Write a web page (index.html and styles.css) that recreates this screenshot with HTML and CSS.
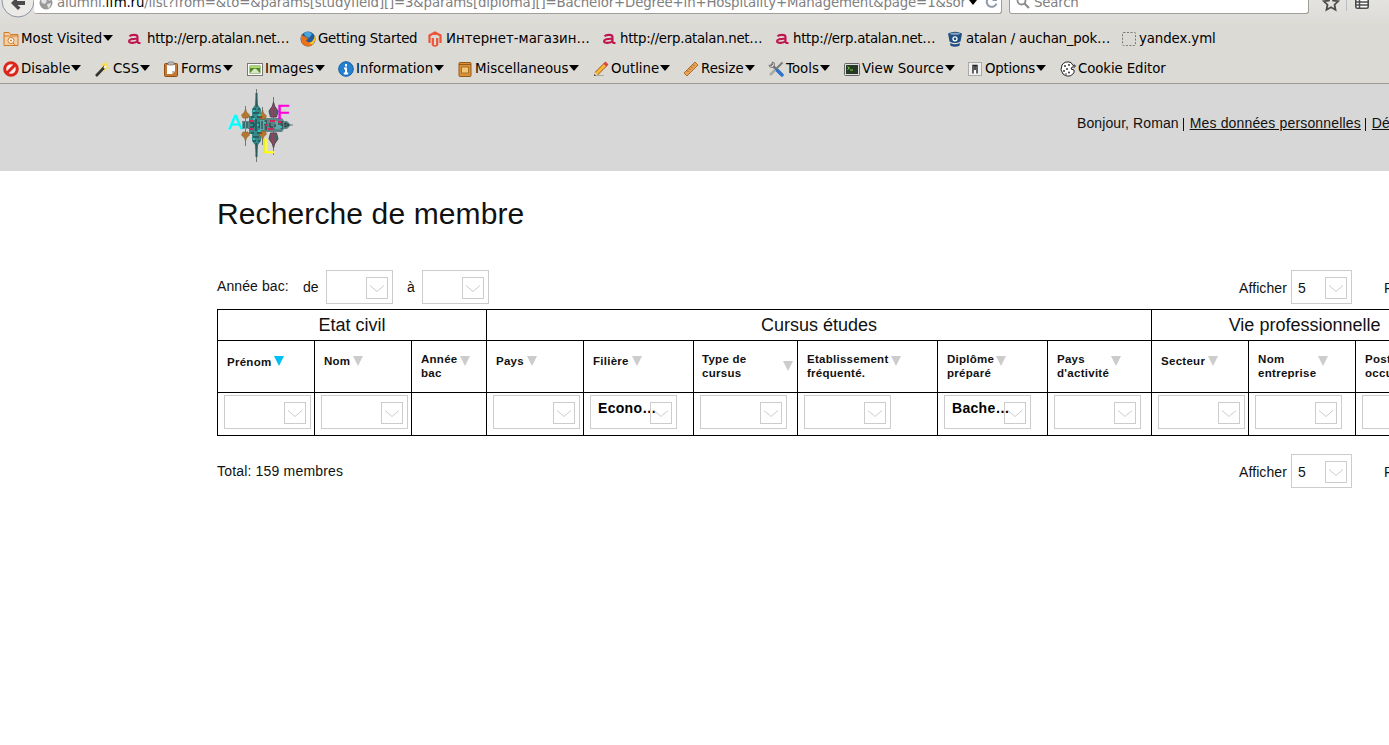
FILE: index.html
```
<!DOCTYPE html>
<html lang="fr">

<head>
    <meta charset="UTF-8">
    <title>Recherche de membre</title>
    <link rel="stylesheet" href="styles.css">
</head>

<body>
    <!-- shared symbols -->
    <svg class="defs" width="0" height="0">
        <symbol id="arrow" viewBox="0 0 10 6"><path d="M0 0h10L5 6z" fill="#000"/></symbol>
        <symbol id="atalan" viewBox="0 0 16 16"><path d="M3.500 5.300C5 3.500 11.500 3 11.500 6v4.500q0 1.700 3 1.500M11.500 7.800C6 7.600 3 8.300 3 10.200c0 2.400 6.500 2.200 8.500-.4" fill="none" stroke="#c0144f" stroke-width="2.100"/></symbol>
        <symbol id="sort" viewBox="0 0 10 10"><path d="M0 0h10L5 10z" fill="currentColor"/></symbol>
        <symbol id="chev" viewBox="0 0 14 7"><path d="M0 .5l7 6 7-6" fill="none" stroke="#ccc"/></symbol>
    </svg>

    <div class="chrome">
        <div class="navbar">
            <svg class="back" width="34" height="19" viewBox="0 0 34 19"><circle cx="18" cy="1" r="16" fill="#eceae7" stroke="#8b95a3"/><path d="M18 -4l-7 7 7 7 2.500-2.500L17.500 5H25V1h-8z" fill="#4b4b4b"/></svg>
            <div class="urlbar">
                <svg class="globe" width="14" height="14" viewBox="0 0 14 14"><circle cx="7" cy="7" r="6.500" fill="#999"/><path d="M2 4l4-1 2 2-2 3-3-1zM8 8l4-1-1 4-2 1zM9 2l3 2-2 1z" fill="#e4e4e4"/></svg>
                <span class="url">alumni.<b>ifm.ru</b>/list?from=&amp;to=&amp;params[studyfield][]=3&amp;params[diploma][]=Bachelor+Degree+in+Hospitality+Management&amp;page=1&amp;sor</span>
                <svg class="drop" width="8" height="5" viewBox="0 0 10 6"><use href="#arrow"/></svg>
                <svg class="reload" width="13" height="13" viewBox="0 0 13 13"><path d="M10 3A5 5 0 1 0 11.500 8.500" fill="none" stroke="#8f9baa" stroke-width="2"/><path d="M12 1v5H7z" fill="#8f9baa"/></svg>
            </div>
            <div class="searchbar">
                <svg width="14" height="14" viewBox="0 0 14 14"><circle cx="5.500" cy="5.500" r="4" fill="none" stroke="#8c8c8c" stroke-width="1.800"/><path d="M8.500 8.500l4.500 4.500" stroke="#8c8c8c" stroke-width="2.200"/></svg>
                <span>Search</span>
            </div>
            <svg class="star" width="18" height="18" viewBox="0 0 18 18"><path d="M9 2l2.200 4.600 5 .6-3.700 3.500 1 5L9 13.200l-4.500 2.500 1-5L1.800 7.200l5-.6z" fill="none" stroke="#4d4d4d" stroke-width="1.800"/></svg>
            <span class="separator"></span>
            <svg class="list" width="14" height="14" viewBox="0 0 14 14"><rect x=".8" y=".8" width="12.400" height="12.400" rx="1.500" fill="#fff" stroke="#4d4d4d" stroke-width="1.600"/><path d="M1 4h12M1 7h12M1 10h12M4.500 1v12" stroke="#4d4d4d" stroke-width="1.500"/></svg>
        </div>

        <div class="toolbar bookmarks">
            <span class="item"><svg viewBox="0 0 16 16"><path d="M1 14.500v-13h5l1.500 2H15v11z" fill="#f3cfa3" stroke="#d07a28"/><path d="M1 5h14" stroke="#d07a28"/><circle cx="8" cy="9.500" r="3" fill="#fff" stroke="#d07a28"/><circle cx="8" cy="9.500" r="1" fill="#d07a28"/><path d="M10 12l2 2" stroke="#d07a28"/></svg>Most Visited<svg class="caret"><use href="#arrow"/></svg></span>
            <span class="item link first"><svg viewBox="0 0 16 16"><use href="#atalan"/></svg>http://erp.atalan.net…</span>
            <span class="item start"><svg viewBox="0 0 16 16"><circle cx="8" cy="8" r="7.500" fill="#215a9c"/><path d="M4 2q5-3 8 1L9 7 5 5z" fill="#4ba5d9"/><path d="M1.500 3Q-.500 9 3 13.500q5 4 10 0 3-4 2-9-.5 5-4 6.500-4 1-5-2l2.500-1L6 6 3 5z" fill="#ec7218"/><path d="M13 13.500q3-4 2-9-1 4-3 6l-3 2z" fill="#f9c431"/></svg>Getting Started</span>
            <span class="item mag"><svg viewBox="0 0 16 16"><path d="M2.500 12V4.500L8 1.500l5.500 3V12M5.800 14V7M10.200 14V7M8 1.500V4M8 15l-2.500-1.500M8 15l2.500-1.500" fill="none" stroke="#ed5338" stroke-width="2.200"/></svg>Интернет-магазин…</span>
            <span class="item link"><svg viewBox="0 0 16 16"><use href="#atalan"/></svg>http://erp.atalan.net…</span>
            <span class="item link"><svg viewBox="0 0 16 16"><use href="#atalan"/></svg>http://erp.atalan.net…</span>
            <span class="item bitbucket"><svg viewBox="0 0 16 16"><path d="M1 2.500l1.500 8q5.500 3 11 0l1.500-8Q8-1 1 2.500z" fill="#205081"/><path d="M3 12l.5 2.800q4.500 2 9 0L13 12q-5 2.500-10 0z" fill="#205081"/><ellipse cx="8" cy="2.800" rx="5" ry="1" fill="#88a6c4"/><circle cx="8" cy="7.800" r="2" fill="#205081" stroke="#fff" stroke-width="1.300"/></svg>atalan / auchan_pok…</span>
            <span class="item yml"><svg viewBox="0 0 16 16"><rect x="1.500" y="1.500" width="13" height="13" rx="1" fill="none" stroke="#777" stroke-dasharray="2 1.500"/></svg>yandex.yml</span>
        </div>

        <div class="toolbar devtools">
            <span class="item"><svg viewBox="0 0 16 16"><circle cx="8" cy="8" r="6.300" fill="#f7eae8" stroke="#d9271c" stroke-width="3"/><path d="M4 12l8-8" stroke="#d9271c" stroke-width="3"/></svg>Disable<svg class="caret"><use href="#arrow"/></svg></span>
            <span class="item"><svg viewBox="0 0 16 16"><path d="M9 0l1 3 4-1-2 3 3 3-4-.5L10 11 8.500 8 5 7l3-2-2-3 2.500 1z" fill="#f7dc4b"/><path d="M1 15L10 5.500" stroke="#333" stroke-width="2.600"/><path d="M9 7l2-2" stroke="#fff" stroke-width="2"/></svg>CSS<svg class="caret"><use href="#arrow"/></svg></span>
            <span class="item"><svg viewBox="0 0 16 16"><rect x="1.500" y="2.500" width="13" height="13" rx="1" fill="#c47832" stroke="#8f5018"/><path d="M4 4h8v6l-3 3H4z" fill="#fff"/><path d="M12 10l-3 3v-3z" fill="#bbb"/><rect x="5" y="1" width="6" height="3" rx="1" fill="#bbb" stroke="#777" stroke-width=".8"/></svg>Forms<svg class="caret"><use href="#arrow"/></svg></span>
            <span class="item"><svg viewBox="0 0 16 16"><rect x=".5" y="2.500" width="15" height="12" fill="#fff" stroke="#777"/><rect x="2.500" y="4.500" width="11" height="8" fill="#4e8b2d"/><path d="M3 5h10v2H3z" fill="#b1d86b"/><path d="M5 10q3-5 6 0l2 2H3z" fill="#dce6c7"/></svg>Images<svg class="caret"><use href="#arrow"/></svg></span>
            <span class="item"><svg viewBox="0 0 16 16"><circle cx="8" cy="8" r="7.300" fill="#2380d2" stroke="#145da8"/><path d="M8 3v2.500M6 7.500h2V12M5.800 12.500h4.400" stroke="#fff" stroke-width="2"/></svg>Information<svg class="caret"><use href="#arrow"/></svg></span>
            <span class="item"><svg viewBox="0 0 16 16"><rect x="2" y="1.500" width="12" height="14" rx="1" fill="#d89239" stroke="#95591a"/><path d="M2 3.500h12" stroke="#95591a"/><rect x="4.500" y="6" width="7" height="6" fill="#f2c777" stroke="#ac6e25"/></svg>Miscellaneous<svg class="caret"><use href="#arrow"/></svg></span>
            <span class="item"><svg viewBox="0 0 16 16"><path d="M2 14.500h9" stroke="#aaa"/><path d="M3 13L13 3" stroke="#9c5c14" stroke-width="4.500"/><path d="M3.500 12.500L12 4" stroke="#f9b637" stroke-width="3"/><path d="M12 4l2-2" stroke="#d44" stroke-width="4"/><path d="M1 15l1-4 3 3z" fill="#efd8b0"/><path d="M1 15l.5-2L3 14.500z" fill="#222"/></svg>Outline<svg class="caret"><use href="#arrow"/></svg></span>
            <span class="item"><svg viewBox="0 0 16 16"><path d="M1 12L12 1l3 3L4 15z" fill="#e6a45a" stroke="#b36d25"/><path d="M4 9.500l1.500 1.500M6 7.500L7.500 9M8 5.500L9.500 7M10 3.500L11.500 5" stroke="#965516"/></svg>Resize<svg class="caret"><use href="#arrow"/></svg></span>
            <span class="item"><svg viewBox="0 0 16 16"><path d="M3 3l10 10" stroke="#777" stroke-width="2.500"/><path d="M1 4q0 3 3.500 2.500L6.500 4Q7 1 4 1l1 2-2 2z" fill="#ddd" stroke="#666" stroke-width=".8"/><path d="M14.500 1.500L8 8" stroke="#777" stroke-width="1.800"/><path d="M2 14l5-5" stroke="#aaa" stroke-width="2.600"/><path d="M9.500 9.500l4.500 4.500" stroke="#2f74ca" stroke-width="3.500" stroke-linecap="round"/></svg>Tools<svg class="caret"><use href="#arrow"/></svg></span>
            <span class="item"><svg viewBox="0 0 16 16"><rect x=".5" y="2.500" width="15" height="12" rx="1" fill="#ddd" stroke="#666"/><rect x="2" y="4" width="12" height="9" fill="#253a24"/><path d="M3.500 5.500l2 1.500-2 1.500M6 9h3" fill="none" stroke="#8bd052"/></svg>View Source<svg class="caret"><use href="#arrow"/></svg></span>
            <span class="item options"><svg viewBox="0 0 16 16"><rect x="1.500" y="1.500" width="13" height="13" fill="#eee" stroke="#aaa"/><path d="M6 12.500V4.500h4v8" fill="#fff" stroke="#222" stroke-width="1.400"/><path d="M8 5v4" stroke="#222" stroke-width="1.600"/></svg>Options<svg class="caret"><use href="#arrow"/></svg></span>
            <span class="item yml"><svg viewBox="0 0 16 16"><path d="M11 1.500Q5-.500 2 4-.500 9 3 13q5 4 9.500.500Q15 11 14 9l-3-1 1-2 3 0V4l-2 .500z" fill="#fff" stroke="#222"/><g fill="#222"><circle cx="5" cy="5" r=".9"/><circle cx="9" cy="4" r=".9"/><circle cx="7" cy="8" r=".9"/><circle cx="4" cy="10" r=".9"/><circle cx="9" cy="11.500" r=".9"/><circle cx="6" cy="13" r=".8"/></g></svg>Cookie Editor</span>
        </div>
    </div>

    <header class="header">
        <svg class="logo" width="70" height="76" viewBox="0 0 70 76">
            <path d="M17.500 19v40M28.500 2v73M34.500 20v38M45.500 10v58M58 38h7" stroke="#777"/>
            <!-- base -->
            <path d="M14 34h10v-3h30l2 3h3l4 4-4 4h-3l-2 3H24v-3H14z" fill="#5d8587"/>
            <!-- tall tower and its reflection -->
            <path d="M28.500 6l1.500 12 3 4v7h3v18h-3v7l-3 4-1.500 12L27 58l-3-4v-7h-3V29h3v-7l3-4z" fill="#37898a"/>
            <path d="M28.500 6v14M28.500 56v14" stroke="#2a5a5c" stroke-width="2"/>
            <!-- domes -->
            <g fill="#b8762c" stroke="#8c5c2c" stroke-width=".6">
                <path d="M17.500 22l1 3 3 3-1.500 3h-5l-1.500-3 3-3zM17.500 54l1-3 3-3-1.500-3h-5l-1.500 3 3 3z"/>
                <path d="M34.500 23l1 3 3 3-1.500 3h-5l-1.500-3 3-3zM34.500 53l1-3 3-3-1.500-3h-5l-1.500 3 3 3z"/>
            </g>
            <path d="M45.500 15l1 4 3.500 5-1.500 6h-6l-1.500-6 3.500-5zM45.500 61l1-4 3.500-5-1.500-6h-6l-1.500 6 3.500 5z" fill="#94445f" stroke="#54404f"/>
            <path d="M43 23v6M46 20v9M48.500 23v5M43 47v6M46 47v9M48.500 48v5" stroke="#3b6466"/>
            <path d="M14 35h6v7h-6zM32 33h4v10h-4zM47 34h5v8h-5z" fill="#5fa9a9"/>
            <path d="M21 34h5M21 42h5M42 34h5M40 42h6M37 38h3M50 35h3" stroke="#d0295a" stroke-width="2"/>
            <g fill="none" stroke="#1c3436" stroke-width="1">
                <path d="M25 22h3M30 22h2M25 26h6M23 30h3M29 30h5M23 46h3M29 46h5M25 50h6M25 54h3M30 54h2"/>
                <path d="M16 35v6M19 35v6M22 36h4v4h-4M28 32v12M31 35v6M34 34v8M38 33v4h-2M38 43v-4M42 36v4h3M47 37v3M50 37h3M54 34v8M57 36l4 2-4 2z"/>
            </g>
            <path d="M25 24h2M30 28h3M25 32h2M30 44h3M25 52h2M29 38h2M52 40h2M36 36h2" stroke="#35d4d0" stroke-width="1.300"/>
            <g class="logo-letters"><text x="0" y="42" fill="#0ff" stroke="#0ff">A</text><text x="49" y="32" fill="#f0d" stroke="#f0d">F</text><text x="35" y="66" fill="#ff0" stroke="#ff0">L</text></g>
        </svg>
        <div class="user-menu"><span>Bonjour, Roman</span><i></i><a href="#">Mes données personnelles</a><i></i><a href="#">Déconnexion</a></div>
    </header>

    <main>
        <h1>Recherche de membre</h1>

        <div class="bar">
            <span class="bac">Année bac:</span>
            <span class="de">de</span>
            <div class="select year"><span class="btn"><svg><use href="#chev"/></svg></span></div>
            <span class="a">à</span>
            <div class="select year"><span class="btn"><svg><use href="#chev"/></svg></span></div>
            <div class="pager">
                <span>Afficher</span>
                <div class="select count">5<span class="btn"><svg><use href="#chev"/></svg></span></div>
                <span class="page">Page</span>
            </div>
        </div>

        <table>
            <colgroup>
                <col class="w97"><col class="w97"><col class="w75"><col class="w97"><col class="w110"><col class="w104">
                <col class="w140"><col class="w110"><col class="w104"><col class="w97"><col class="w107"><col class="w102">
            </colgroup>
            <tr class="groups">
                <th colspan="3">Etat civil</th>
                <th colspan="6">Cursus études</th>
                <th colspan="3">Vie professionnelle</th>
            </tr>
            <tr class="titles">
                <th><div class="one active"><span>Prénom</span><svg><use href="#sort"/></svg></div></th>
                <th><div class="one"><span>Nom</span><svg><use href="#sort"/></svg></div></th>
                <th><div><span>Année<br>bac</span><svg><use href="#sort"/></svg></div></th>
                <th><div class="one"><span>Pays</span><svg><use href="#sort"/></svg></div></th>
                <th><div class="one"><span>Filière</span><svg><use href="#sort"/></svg></div></th>
                <th><div class="type"><span>Type de<br>cursus</span><svg><use href="#sort"/></svg></div></th>
                <th><div><span>Etablissement<br>fréquenté.</span><svg><use href="#sort"/></svg></div></th>
                <th><div><span>Diplôme<br>préparé</span><svg><use href="#sort"/></svg></div></th>
                <th><div><span>Pays<br>d'activité</span><svg><use href="#sort"/></svg></div></th>
                <th><div class="one"><span>Secteur</span><svg><use href="#sort"/></svg></div></th>
                <th><div><span>Nom<br>entreprise</span><svg><use href="#sort"/></svg></div></th>
                <th><div><span>Poste<br>occupé</span><svg><use href="#sort"/></svg></div></th>
            </tr>
            <tr class="filters">
                <td><div class="select"><span class="btn"><svg><use href="#chev"/></svg></span></div></td>
                <td><div class="select"><span class="btn"><svg><use href="#chev"/></svg></span></div></td>
                <td></td>
                <td><div class="select"><span class="btn"><svg><use href="#chev"/></svg></span></div></td>
                <td><div class="select"><b>Econo…</b><span class="btn"><svg><use href="#chev"/></svg></span></div></td>
                <td><div class="select"><span class="btn"><svg><use href="#chev"/></svg></span></div></td>
                <td><div class="select"><span class="btn"><svg><use href="#chev"/></svg></span></div></td>
                <td><div class="select"><b>Bache…</b><span class="btn"><svg><use href="#chev"/></svg></span></div></td>
                <td><div class="select"><span class="btn"><svg><use href="#chev"/></svg></span></div></td>
                <td><div class="select"><span class="btn"><svg><use href="#chev"/></svg></span></div></td>
                <td><div class="select"><span class="btn"><svg><use href="#chev"/></svg></span></div></td>
                <td><div class="select"><span class="btn"><svg><use href="#chev"/></svg></span></div></td>
            </tr>
        </table>

        <div class="bar bottom">
            <span class="total">Total: 159 membres</span>
            <div class="pager">
                <span>Afficher</span>
                <div class="select count">5<span class="btn"><svg><use href="#chev"/></svg></span></div>
                <span class="page">Page</span>
            </div>
        </div>
    </main>
</body>

</html>
```
FILE: styles.css
```
* {
    box-sizing: border-box;
}

body {
    margin: 0;
    overflow: hidden;
    background: #fff;
    color: #111;
    font: 14px/16px "Liberation Sans", Arial, sans-serif;
}

svg {
    display: block;
    flex: none;
}

.defs {
    position: absolute;
}

/* browser toolbars */
.chrome {
    height: 84px;
    overflow: hidden;
    background: linear-gradient(#e4e3e0, #dcdad5 26px);
    border-bottom: 1px solid #9c9a94;
    color: #000;
    font: 13.33px/16px "DejaVu Sans", sans-serif;
    white-space: nowrap;
}

.navbar {
    display: flex;
    align-items: flex-start;
    height: 23px;
}

.urlbar,
.searchbar {
    display: flex;
    height: 14px;
    background: #fff;
    border: 1px solid #a09e99;
    border-top: 0;
    border-radius: 0 0 3px 3px;
    color: #808080;
}

.urlbar {
    width: 968px;
    border-left: 0;
}

.urlbar b {
    color: #000;
    font-weight: normal;
}

.globe {
    margin: -4px 4px 0 5px;
}

.url {
    width: 907px;
    height: 19px;
    margin-top: -5px;
    letter-spacing: -.155px;
}

.drop {
    margin: 0 8px 0 5px;
}

.reload {
    margin-top: -5px;
}

.searchbar {
    width: 300px;
    margin-left: 7px;
}

.searchbar svg {
    margin: -5px 4px 0 6px;
}

.searchbar span {
    margin-top: -5px;
    letter-spacing: -.2px;
}

.star {
    margin: -6px 0 0 13px;
}

.separator {
    width: 1px;
    height: 11px;
    margin: 0 8px 0 6px;
    background: #b9bec4;
}

.list {
    margin-top: -5px;
}

.toolbar {
    display: grid;
    height: 30px;
    padding: 1px 0 0 3px;
}

.bookmarks {
    grid-template-columns: 123px 174px 127px 174px 173px 173px 174px 200px;
}

.devtools {
    grid-template-columns: 92px 68px 84px 91px 119px 136px 90px 85px 76px 124px 92px 200px;
}

.item {
    display: flex;
    align-items: center;
}

.item svg {
    width: 16px;
    height: 16px;
    margin-right: 2px;
}

.item.link {
    letter-spacing: -.28px;
}

.item.link svg,
.item.bitbucket svg,
.item.mag svg {
    margin-right: 3px;
}

.item.first svg {
    margin-right: 5px;
}

.item.start {
    letter-spacing: -.25px;
}

.item.bitbucket {
    letter-spacing: -.2px;
}

.item.yml {
    letter-spacing: -.1px;
}

.item.options {
    letter-spacing: -.2px;
}

.item.options svg:first-child {
    margin: 0 2px 0 -1px;
}

.item .caret {
    width: 10px;
    height: 6px;
    margin: 0 0 1px 1px;
}

/* site header */
.header {
    display: flex;
    height: 87px;
    background: #d7d7d7;
    white-space: nowrap;
}

.logo {
    margin: 3px 0 0 228px;
}

.logo-letters {
    font: 21px "Liberation Sans", Arial, sans-serif;
    stroke-width: .5px;
}

.user-menu {
    display: flex;
    margin: 31px 0 0 779px;
    letter-spacing: .09px;
}

.user-menu a {
    color: #111;
    letter-spacing: .16px;
}

.user-menu i {
    width: 1px;
    height: 13px;
    margin: 3px 6px 0 4px;
    background: #111;
}

/* search page */
main {
    width: 1240px;
    margin-left: 217px;
}

h1 {
    margin: 0;
    padding: 25px 0 39px;
    font-size: 30px;
    font-weight: normal;
    line-height: 35px;
    letter-spacing: .12px;
}

.bar {
    display: flex;
    height: 34px;
    margin-bottom: 5px;
    white-space: nowrap;
}

.bar.bottom {
    margin-top: 18px;
}

.bac {
    width: 86px;
    padding-top: 8px;
    letter-spacing: .1px;
}

.de {
    width: 23px;
    padding-top: 9px;
}

.a {
    margin-left: 14px;
    width: 15px;
    padding-top: 9px;
}

.total {
    padding-top: 9px;
    letter-spacing: .18px;
}

.pager {
    display: flex;
    width: 218px;
    margin-left: auto;
    line-height: 36px;
}

.pager > span {
    width: 52px;
    letter-spacing: .1px;
}

.pager .page {
    margin-left: 32px;
}

.select {
    display: flex;
    width: 87px;
    height: 34px;
    padding: 6px 4px 0 7px;
    border: 1px solid #ccc;
}

.select.year {
    width: 67px;
}

.select.count {
    width: 61px;
    padding-left: 6px;
    line-height: 22px;
}

.select b {
    width: 50px;
    margin-top: -2px;
    color: #000;
    letter-spacing: .3px;
    white-space: nowrap;
}

.btn {
    display: flex;
    flex: none;
    align-items: center;
    justify-content: center;
    width: 22px;
    height: 22px;
    margin-left: auto;
    border: 1px solid #ccc;
}

.btn svg {
    width: 14px;
    height: 7px;
}

table {
    width: 1241px;
    table-layout: fixed;
    border-collapse: collapse;
}

th,
td {
    padding: 0;
    border: 1px solid #000;
    text-align: left;
    vertical-align: top;
}

.w75 { width: 75px; }
.w97 { width: 97px; }
.w102 { width: 102px; }
.w104 { width: 104px; }
.w107 { width: 107px; }
.w110 { width: 110px; }
.w140 { width: 140px; }

.groups th {
    height: 31px;
    font-size: 18px;
    font-weight: normal;
    line-height: 30px;
    text-align: center;
}

.titles th {
    height: 52px;
    font-size: 11.5px;
    line-height: 14px;
    letter-spacing: .27px;
}

.titles div {
    display: flex;
    padding: 11px 0 0 9px;
}

.titles .one {
    padding-top: 13px;
}

.titles svg {
    width: 10px;
    height: 10px;
    margin: 4px 0 0 2px;
    color: #ccc;
}

.titles .one svg {
    margin: 2px 0 0 3px;
}

.titles .active {
    padding-top: 14px;
}

.titles .active svg {
    margin-top: 1px;
    color: #00bff3;
}

.titles .type {
    padding-left: 8px;
}

.titles .type span {
    width: 79px;
}

.titles .type svg {
    margin-top: 9px;
}

.filters td {
    height: 43px;
    padding: 2px 0 0 6px;
}
```
